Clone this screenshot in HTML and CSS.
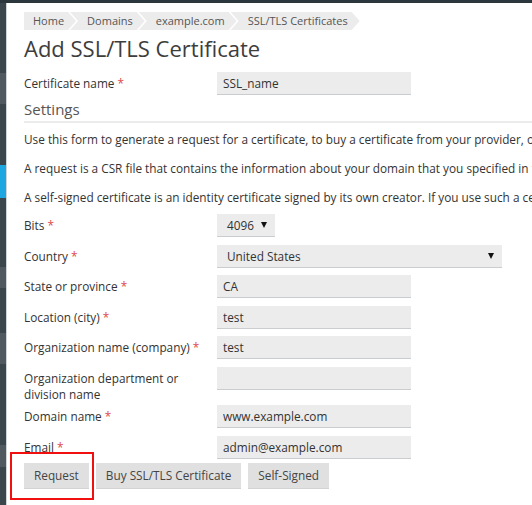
FILE: index.html
```html
<!DOCTYPE html>
<html lang="en">
<head>
<meta charset="utf-8">
<title>Add SSL/TLS Certificate</title>
<link rel="stylesheet" href="styles.css">
</head>
<body>
<div class="topbar"></div>
<div class="layout">
  <div class="sidebar">
    <div class="seg dark h70"></div>
    <div class="seg light h31"></div>
    <div class="seg dark h61"></div>
    <div class="seg blue h33"></div>
    <div class="seg dark h69"></div>
    <div class="seg light h21"></div>
    <div class="seg dark h45"></div>
    <div class="seg light h31"></div>
    <div class="seg dark h81"></div>
    <div class="seg light h22"></div>
    <div class="seg dark grow"></div>
  </div>
  <main class="content">
    <ul class="breadcrumbs">
      <li class="crumb first">Home</li>
      <li class="crumb">Domains</li>
      <li class="crumb">example.com</li>
      <li class="crumb">SSL/TLS Certificates</li>
    </ul>
    <h1 class="title">Add SSL/TLS Certificate</h1>
    <div class="row">
      <label class="label">Certificate name <span class="req">*</span></label>
      <div class="field"><input class="input" type="text" value="SSL_name"></div>
    </div>
    <h2 class="section">Settings</h2>
    <p class="hint first-hint">Use this form to generate a request for a certificate, to buy a certificate from your provider, or to create a self-signed certificate.</p>
    <p class="hint">A request is a CSR file that contains the information about your domain that you specified in the form.</p>
    <p class="hint last-hint">A self-signed certificate is an identity certificate signed by its own creator. If you use such a certificate, visitors will see a warning.</p>

    <div class="row">
      <label class="label">Bits <span class="req">*</span></label>
      <div class="field"><div class="select small"><span>4096</span><span class="caret"></span></div></div>
    </div>
    <div class="row">
      <label class="label">Country <span class="req">*</span></label>
      <div class="field"><div class="select wide"><span>United States</span><span class="caret"></span></div></div>
    </div>
    <div class="row">
      <label class="label">State or province <span class="req">*</span></label>
      <div class="field"><input class="input" type="text" value="CA"></div>
    </div>
    <div class="row">
      <label class="label">Location (city) <span class="req">*</span></label>
      <div class="field"><input class="input" type="text" value="test"></div>
    </div>
    <div class="row">
      <label class="label">Organization name (company) <span class="req">*</span></label>
      <div class="field"><input class="input" type="text" value="test"></div>
    </div>
    <div class="row tall">
      <label class="label">Organization department or division name</label>
      <div class="field"><input class="input" type="text" value=""></div>
    </div>
    <div class="row">
      <label class="label">Domain name <span class="req">*</span></label>
      <div class="field"><input class="input" type="text" value="www.example.com"></div>
    </div>
    <div class="row last">
      <label class="label">Email <span class="req">*</span></label>
      <div class="field"><input class="input" type="text" value="admin@example.com"></div>
    </div>

    <div class="buttons">
      <div class="btn-wrap">
        <button class="btn">Request</button>
        <span class="highlight"></span>
      </div>
      <button class="btn">Buy SSL/TLS Certificate</button>
      <button class="btn">Self-Signed</button>
    </div>
  </main>
</div>
</body>
</html>
```

FILE: styles.css
```css
html, body {
  margin: 0;
  padding: 0;
  height: 100%;
  overflow: hidden;
  background: #fff;
  font-family: "Open Sans", "DejaVu Sans", sans-serif;
  color: #333;
  font-size: 11.8px;
}

.topbar {
  height: 3px;
  background: #2c363d;
}

.layout {
  display: flex;
  height: calc(100% - 3px);
}

.sidebar {
  width: 6px;
  flex: none;
  display: flex;
  flex-direction: column;
  border-right: 1px solid #cfd4d7;
}

.seg { flex: none; }
.seg.dark { background: #3a454c; }
.seg.light { background: #4f595f; }
.seg.blue { background: #1da6e0; }
.seg.grow { flex: 1; }
.h70 { height: 70px; }
.h31 { height: 31px; }
.h61 { height: 61px; }
.h33 { height: 33px; }
.h69 { height: 69px; }
.h21 { height: 21px; }
.h45 { height: 45px; }
.h81 { height: 81px; }
.h22 { height: 22px; }

.content {
  flex: 1;
  min-width: 0;
  padding: 9px 0 0 17px;
  white-space: nowrap;
}

.breadcrumbs {
  list-style: none;
  margin: 0;
  padding: 0;
  display: flex;
  height: 18px;
}

.crumb {
  background: #ececec;
  color: #555;
  font-size: 11px;
  line-height: 18px;
  padding: 0 12px 0 17px;
  margin-left: -6px;
  clip-path: polygon(0 0, calc(100% - 8px) 0, 100% 50%, calc(100% - 8px) 100%, 0 100%, 8px 50%);
}

.crumb.first {
  margin-left: 0;
  padding-left: 9px;
  clip-path: polygon(0 0, calc(100% - 8px) 0, 100% 50%, calc(100% - 8px) 100%, 0 100%);
}

.title {
  margin: 3px 0 0;
  font-size: 22px;
  line-height: 30px;
  font-weight: 400;
  color: #3d3d3d;
}

.row {
  display: flex;
  align-items: flex-start;
  margin-bottom: 7.6px;
}

.title + .row { margin-top: 9px; margin-bottom: 4px; }

.row.tall { margin-bottom: 3px; }
.row.last { margin-bottom: 4px; }

.label {
  width: 193px;
  flex: none;
  padding-top: 3px;
  line-height: 16px;
  white-space: normal;
  color: #333;
}

.row.tall .label { width: 170px; margin-right: 23px; }

.req { color: #e0474c; }

.input {
  box-sizing: border-box;
  width: 194px;
  height: 23px;
  border: none;
  border-bottom: 1px solid #c9cdd0;
  background: #ececec;
  padding: 0 6px;
  margin: 0;
  font-family: "Open Sans", "DejaVu Sans", sans-serif;
  font-size: 11.8px;
  color: #333;
  outline: none;
}

.select {
  box-sizing: border-box;
  height: 23px;
  display: flex;
  align-items: center;
  justify-content: space-between;
  background: #ececec;
  border-bottom: 1px solid #c9cdd0;
  padding: 0 8px 0 10px;
  color: #333;
}
.select.small { width: 58px; }
.select.wide { width: 285px; }

.caret {
  width: 0;
  height: 0;
  border-left: 3px solid transparent;
  border-right: 3px solid transparent;
  border-top: 6px solid #111;
}

.section {
  margin: 0;
  font-size: 15px;
  line-height: 20px;
  font-weight: 400;
  color: #555;
  padding-bottom: 2px;
  border-bottom: 2px solid #ececec;
}

.hint {
  margin: 0 0 13px;
  line-height: 16px;
  color: #333;
}
.hint.first-hint { margin-top: 8px; }
.hint.last-hint { margin-bottom: 9px; }

.buttons {
  display: flex;
  gap: 7px;
}

.btn-wrap { position: relative; display: flex; }

.btn {
  height: 26px;
  padding: 0 10px;
  border: none;
  background: #e0e0e0;
  color: #444;
  font-family: "Open Sans", "DejaVu Sans", sans-serif;
  font-size: 11.8px;
  border-bottom: 1px solid #d2d2d2;
}

.highlight {
  position: absolute;
  left: -14px;
  top: -11px;
  right: -5px;
  bottom: -11px;
  border: 2px solid #f01010;
  pointer-events: none;
}
```
